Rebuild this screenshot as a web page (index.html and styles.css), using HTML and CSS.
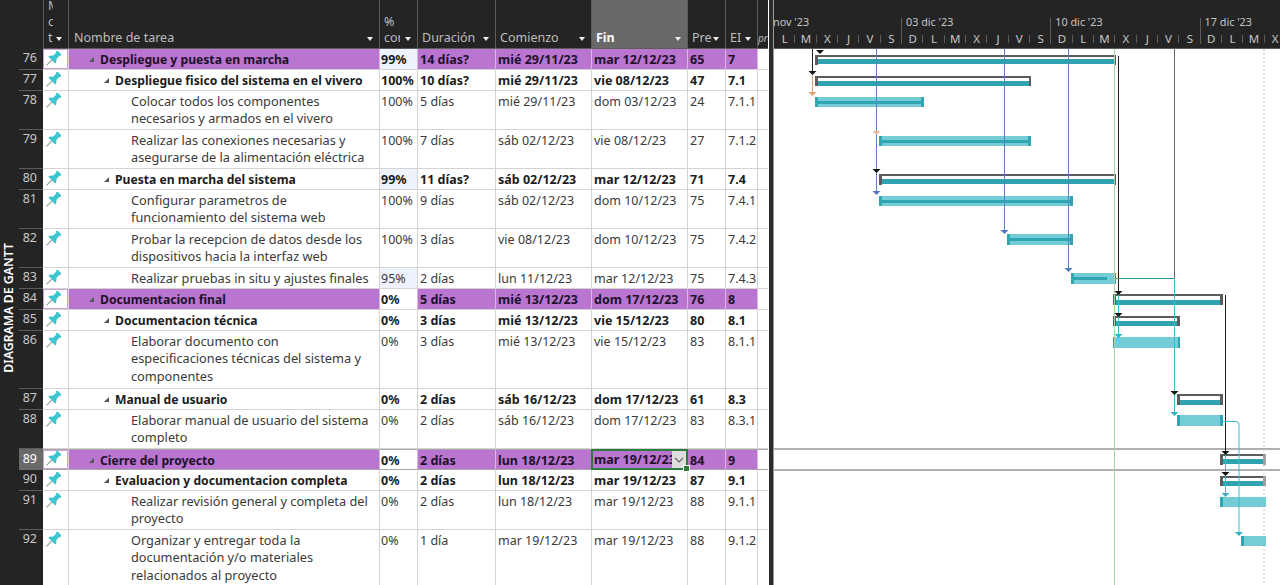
FILE: index.html
```html
<!DOCTYPE html>
<html>
<head>
    <title>Diagrama de Gantt</title>
    <link rel="stylesheet" href="styles.css">
</head>
<body>
    <svg class="defs" width="0" height="0">
        <symbol id="pin" viewBox="0 0 14 14">
            <g transform="rotate(45 7 7)">
                <path fill="#3cc4cf" d="M4 -1h6v1.6h-1v4l2.2 2.6v1.3H2.8V7.2L5 4.6v-4H4z"/>
                <path fill="#9a9a9a" d="M6.5 8.5h1V15h-1z"/>
            </g>
        </symbol>
    </svg>

    <div class="app">
        <div class="side"><span>DIAGRAMA DE GANTT</span></div>

        <div class="sheet">
            <div class="head cols">
                <div class="hcell"></div>
                <div class="hcell modo"><span>M<br>c<br>t</span><i class="drop"></i></div>
                <div class="hcell nom"><span>Nombre de tarea</span><i class="drop"></i></div>
                <div class="hcell pct"><span>%<br>cor</span><i class="drop"></i></div>
                <div class="hcell"><span>Duración</span><i class="drop"></i></div>
                <div class="hcell"><span>Comienzo</span><i class="drop"></i></div>
                <div class="hcell sorted"><span>Fin</span><i class="drop"></i></div>
                <div class="hcell"><span>Pre</span><i class="drop"></i></div>
                <div class="hcell"><span>EI</span><i class="drop"></i></div>
                <div class="hcell more"><span>pre</span></div>
            </div>

            <div class="row cols h1 sum"><div class="num">76</div><div class="pin boxed"><svg><use href="#pin"/></svg></div><div class="name l1"><i class="fold"></i>Despliegue y puesta en marcha</div><div class="pc hl">99%</div><div>14 días?</div><div>mié 29/11/23</div><div>mar 12/12/23</div><div>65</div><div>7</div><div class="end"></div></div>
            <div class="row cols h1 bold"><div class="num">77</div><div class="pin"><svg><use href="#pin"/></svg></div><div class="name l2"><i class="fold"></i>Despliegue fisico del sistema en el vivero</div><div class="pc">100%</div><div>10 días?</div><div>mié 29/11/23</div><div>vie 08/12/23</div><div>47</div><div>7.1</div><div class="end"></div></div>
            <div class="row cols h2"><div class="num">78</div><div class="pin"><svg><use href="#pin"/></svg></div><div class="name l3">Colocar todos los componentes<br>necesarios y armados en el vivero</div><div class="pc">100%</div><div>5 días</div><div>mié 29/11/23</div><div>dom 03/12/23</div><div>24</div><div>7.1.1</div><div class="end"></div></div>
            <div class="row cols h2"><div class="num">79</div><div class="pin"><svg><use href="#pin"/></svg></div><div class="name l3">Realizar las conexiones necesarias y<br>asegurarse de la alimentación eléctrica</div><div class="pc">100%</div><div>7 días</div><div>sáb 02/12/23</div><div>vie 08/12/23</div><div>27</div><div>7.1.2</div><div class="end"></div></div>
            <div class="row cols h1 bold"><div class="num">80</div><div class="pin"><svg><use href="#pin"/></svg></div><div class="name l2"><i class="fold"></i>Puesta en marcha del sistema</div><div class="pc hl">99%</div><div>11 días?</div><div>sáb 02/12/23</div><div>mar 12/12/23</div><div>71</div><div>7.4</div><div class="end"></div></div>
            <div class="row cols h2"><div class="num">81</div><div class="pin"><svg><use href="#pin"/></svg></div><div class="name l3">Configurar parametros de<br>funcionamiento del sistema web</div><div class="pc">100%</div><div>9 días</div><div>sáb 02/12/23</div><div>dom 10/12/23</div><div>75</div><div>7.4.1</div><div class="end"></div></div>
            <div class="row cols h2"><div class="num">82</div><div class="pin"><svg><use href="#pin"/></svg></div><div class="name l3">Probar la recepcion de datos desde los<br>dispositivos hacia la interfaz web</div><div class="pc">100%</div><div>3 días</div><div>vie 08/12/23</div><div>dom 10/12/23</div><div>75</div><div>7.4.2</div><div class="end"></div></div>
            <div class="row cols h1"><div class="num">83</div><div class="pin"><svg><use href="#pin"/></svg></div><div class="name l3">Realizar pruebas in situ y ajustes finales</div><div class="pc hl">95%</div><div>2 días</div><div>lun 11/12/23</div><div>mar 12/12/23</div><div>75</div><div>7.4.3</div><div class="end"></div></div>
            <div class="row cols h1 sum"><div class="num">84</div><div class="pin boxed"><svg><use href="#pin"/></svg></div><div class="name l1"><i class="fold"></i>Documentacion final</div><div class="pc">0%</div><div>5 días</div><div>mié 13/12/23</div><div>dom 17/12/23</div><div>76</div><div>8</div><div class="end"></div></div>
            <div class="row cols h1 bold"><div class="num">85</div><div class="pin"><svg><use href="#pin"/></svg></div><div class="name l2"><i class="fold"></i>Documentacion técnica</div><div class="pc">0%</div><div>3 días</div><div>mié 13/12/23</div><div>vie 15/12/23</div><div>80</div><div>8.1</div><div class="end"></div></div>
            <div class="row cols h3"><div class="num">86</div><div class="pin"><svg><use href="#pin"/></svg></div><div class="name l3">Elaborar documento con<br>especificaciones técnicas del sistema y<br>componentes</div><div class="pc">0%</div><div>3 días</div><div>mié 13/12/23</div><div>vie 15/12/23</div><div>83</div><div>8.1.1</div><div class="end"></div></div>
            <div class="row cols h1 bold"><div class="num">87</div><div class="pin"><svg><use href="#pin"/></svg></div><div class="name l2"><i class="fold"></i>Manual de usuario</div><div class="pc">0%</div><div>2 días</div><div>sáb 16/12/23</div><div>dom 17/12/23</div><div>61</div><div>8.3</div><div class="end"></div></div>
            <div class="row cols h2"><div class="num">88</div><div class="pin"><svg><use href="#pin"/></svg></div><div class="name l3">Elaborar manual de usuario del sistema<br>completo</div><div class="pc">0%</div><div>2 días</div><div>sáb 16/12/23</div><div>dom 17/12/23</div><div>83</div><div>8.3.1</div><div class="end"></div></div>
            <div class="row cols h1 sum picked"><div class="num">89</div><div class="pin boxed"><svg><use href="#pin"/></svg></div><div class="name l1"><i class="fold"></i>Cierre del proyecto</div><div class="pc">0%</div><div>2 días</div><div>lun 18/12/23</div><div class="active"><span>mar 19/12/23</span><b class="chev"><svg width="10" height="6" viewBox="0 0 10 6"><path d="M1 1l4 4 4-4" fill="none" stroke="#666" stroke-width="1.2"/></svg></b><em class="handle"></em></div><div>84</div><div>9</div><div class="end"></div></div>
            <div class="row cols h1 bold"><div class="num">90</div><div class="pin"><svg><use href="#pin"/></svg></div><div class="name l2"><i class="fold"></i>Evaluacion y documentacion completa</div><div class="pc">0%</div><div>2 días</div><div>lun 18/12/23</div><div>mar 19/12/23</div><div>87</div><div>9.1</div><div class="end"></div></div>
            <div class="row cols h2"><div class="num">91</div><div class="pin"><svg><use href="#pin"/></svg></div><div class="name l3">Realizar revisión general y completa del<br>proyecto</div><div class="pc">0%</div><div>2 días</div><div>lun 18/12/23</div><div>mar 19/12/23</div><div>88</div><div>9.1.1</div><div class="end"></div></div>
            <div class="row cols h3"><div class="num">92</div><div class="pin"><svg><use href="#pin"/></svg></div><div class="name l3">Organizar y entregar toda la<br>documentación y/o materiales<br>relacionados al proyecto</div><div class="pc">0%</div><div>1 día</div><div>mar 19/12/23</div><div>mar 19/12/23</div><div>88</div><div>9.1.2</div><div class="end"></div></div>
        </div>

        <div class="splitter"></div>

        <div class="gantt">
            <div class="timescale">
                <div class="weeks">
                    <div class="week first">nov '23</div>
                    <div class="week">03 dic '23</div>
                    <div class="week">10 dic '23</div>
                    <div class="week">17 dic '23</div>
                </div>
                <div class="days">
                    <span>L</span><span>M</span><span>X</span><span>J</span><span>V</span><span>S</span>
                    <span>D</span><span>L</span><span>M</span><span>X</span><span>J</span><span>V</span><span>S</span>
                    <span>D</span><span>L</span><span>M</span><span>X</span><span>J</span><span>V</span><span>S</span>
                    <span>D</span><span>L</span><span>M</span><span>X</span>
                </div>
            </div>

            <!-- viewBox uses page coordinates so bars can be read off the dates -->
            <svg class="chart" viewBox="774 49 506 536" width="506" height="536">
                <path class="rowline" d="M774 449H1280M774 470H1280"/>
                <path class="dotted" d="M1264 49V585"/>

                <g class="summary">
                    <path d="M815 55h301v2H815zM815 55h3v10h-3zM1114 55h2v10h-2z"/><rect class="done" x="818" y="59" width="296" height="5"/>
                    <path d="M815 76h216v2H815zM815 76h3v10h-3zM1029 76h2v10h-2z"/><rect class="done" x="818" y="81" width="211" height="5"/>
                    <path d="M879 174h237v2H879zM879 174h3v11h-3zM1114 174h2v11h-2z"/><rect class="done" x="882" y="179" width="232" height="5"/>
                    <path d="M1113 294h110v2h-110zM1113 294h3v11h-3zM1220 294h3v11h-3z"/><rect class="done" x="1116" y="300" width="104" height="5"/>
                    <path d="M1113 316h67v2h-67zM1113 316h3v10h-3zM1177 316h3v10h-3z"/><rect class="done" x="1116" y="321" width="61" height="5"/>
                    <path d="M1177 394h46v2h-46zM1177 394h3v11h-3zM1220 394h3v11h-3z"/><rect class="done" x="1180" y="400" width="40" height="5"/>
                    <path d="M1220 454h46v2h-46zM1220 454h3v11h-3z"/><rect class="done" x="1223" y="459" width="40" height="5"/>
                    <path d="M1220 476h46v2h-46zM1220 476h3v10h-3z"/><rect class="done" x="1223" y="481" width="40" height="5"/>
                    <path class="cap" d="M1263 454h3v11h-3zM1263 476h3v10h-3z"/>
                </g>

                <g class="task">
                    <rect x="815" y="97" width="109" height="10"/><path d="M815 97h3v10h-3zM921 97h3v10h-3zM818 101h103v3H818z"/>
                    <rect x="879" y="136" width="152" height="10"/><path d="M879 136h3v10h-3zM1028 136h3v10h-3zM882 140h146v3H882z"/>
                    <rect x="879" y="196" width="194" height="10"/><path d="M879 196h3v10h-3zM1070 196h3v10h-3zM882 200h188v3H882z"/>
                    <rect x="1007" y="234" width="66" height="11"/><path d="M1007 234h3v11h-3zM1070 234h3v11h-3zM1010 238h60v3h-60z"/>
                    <rect x="1071" y="273" width="45" height="11"/><path d="M1071 273h3v11h-3zM1114 273h2v11h-2zM1074 277h33v3h-33z"/>
                    <rect x="1113" y="337" width="67" height="11"/><path d="M1113 337h2v11h-2zM1178 337h2v11h-2z"/>
                    <rect x="1177" y="415" width="46" height="11"/><path d="M1177 415h3v11h-3zM1220 415h3v11h-3z"/>
                    <rect x="1220" y="497" width="46" height="10"/><path d="M1220 497h3v10h-3z"/>
                    <rect x="1241" y="536" width="25" height="10"/><path d="M1241 536h3v10h-3z"/>
                </g>

                <path class="today" d="M1114.5 49V585"/>

                <path class="link black" d="M812.5 49V72M1118.5 56V291M1225.5 295V451"/>
                <path class="link orange" d="M812.5 75V93"/>
                <path class="link blue" d="M876.5 49V192M1004.5 49V231M1068.5 49V269"/>
                <path class="link gray" d="M1174.5 49V278"/>
                <path class="link teal thin" d="M1116 278.5H1174.5"/>
                <path class="link teal" d="M1174.5 278V413M1118.5 292V335M1225.5 452V494M1223 421.5H1236q3 0 3 3V534"/>

                <path class="head-black" d="M816 50h8l-4 4zM808.500 71h8l-4 4zM872.500 169h8l-4 4zM1114.500 291h8l-4 4zM1114.500 313h8l-4 4zM1170.500 391h8l-4 4zM1221.500 451h8l-4 4zM1221.500 472h8l-4 4z"/>
                <path class="head-orange" d="M808.500 92h8l-4 4z"/>
                <path class="head-pale" d="M872.500 131h8l-4 4z"/>
                <path class="head-blue" d="M872.500 191h8l-4 4zM1000.500 230h8l-4 4zM1064.500 268h8l-4 4z"/>
                <path class="head-teal" d="M1114.500 334h8l-4 4zM1170.500 412h8l-4 4zM1221.500 493h8l-4 4zM1235 532h8l-4 4z"/>
            </svg>
        </div>
    </div>
</body>
</html>
```

FILE: styles.css
```css
body {
    margin: 0;
    height: 585px;
    overflow: hidden;
    background-color: #fff;
    font-family: "Noto Sans", Arial, sans-serif;
    font-size: 12.5px;
    color: #3a3a3a;
}

.defs {
    display: block;
    height: 0;
}

.app {
    display: flex;
    height: 585px;
}

/* left band */
.side {
    width: 19px;
    flex: none;
    box-sizing: border-box;
    padding: 30px 3px 0 0;
    background-color: #242424;
    display: flex;
    align-items: center;
    justify-content: center;
}

.side span {
    writing-mode: vertical-rl;
    transform: rotate(180deg);
    color: #fff;
    font-size: 12.3px;
    font-weight: 600;
    white-space: nowrap;
}

/* table */
.sheet {
    width: 749px;
    flex: none;
    height: 585px;
    overflow: hidden;
    background-color: #242424;
}

.cols {
    display: grid;
    grid-template-columns: 24px 26px 310px 38px 78px 96px 96px 38px 32px 11px;
}

.head {
    height: 49px;
    background-color: #242424;
    color: #bdbdbd;
}

.hcell {
    display: flex;
    align-items: flex-end;
    justify-content: space-between;
    padding: 0 6px 2px 4px;
    border-left: 1px solid #5c5c5c;
    border-bottom: 1px solid #5c5c5c;
    overflow: hidden;
    line-height: 16px;
    white-space: nowrap;
}

.hcell:first-child {
    border-left: 0;
    border-bottom-color: #242424;
}

.modo {
    border-right: 1px solid #5c5c5c;
}

.modo span {
    width: 5px;
    overflow: hidden;
}

.nom {
    border-left: 0;
    padding-left: 5px;
}

.pct span {
    width: 16px;
    overflow: hidden;
}

.hcell.sorted {
    background-color: #696969;
    color: #fff;
    font-weight: 700;
}

.more {
    padding: 0 0 2px 0;
    font-style: italic;
    font-size: 10px;
}

.more span {
    width: 10px;
    overflow: hidden;
}

.drop {
    flex: none;
    width: 0;
    height: 0;
    margin-bottom: 5px;
    border-left: 3.5px solid transparent;
    border-right: 3.5px solid transparent;
    border-top: 4px solid #eee;
}

.row {
    background-color: #fff;
}

.h1 { height: 21px; }
.h2 { height: 39px; }
.h3 { height: 58px; }

.row > div {
    box-sizing: border-box;
    padding: 2px 0 0 2px;
    line-height: 17.3px;
    border-left: 1px solid #d4d4d4;
    border-bottom: 1px solid #d4d4d4;
    white-space: nowrap;
    overflow: hidden;
}

.row > .num {
    background-color: #242424;
    color: #c8c8c8;
    font-weight: 400;
    text-align: right;
    padding: 0 6px 0 0;
    border-left: 0;
    border-bottom: 1px solid #5c5c5c;
}

.row > .pin {
    padding: 2px 0 0 2px;
    border-left: 0;
    border-right: 1px solid #d4d4d4;
}

.pin svg {
    display: block;
    width: 16px;
    height: 16px;
}

.row > .name {
    position: relative;
    font-size: 12.75px;
    border-left: 0;
}

.bold > .name,
.sum > .name {
    font-size: 12.15px;
}

.row > .l1 { padding-left: 31px; }
.row > .l2 { padding-left: 46px; }
.row > .l3 { padding-left: 62px; }

.fold {
    position: absolute;
    width: 0;
    height: 0;
    top: 8px;
    margin-left: -11px;
    border-left: 5px solid transparent;
    border-bottom: 5px solid #555;
}

.row.bold,
.row.sum {
    font-weight: 700;
    color: #1c1c1c;
}

.row > .hl {
    background-color: #eef2fc;
}

.row > .pc {
    padding-left: 1px;
}

.row > .end {
    padding: 0;
}

/* purple summary rows */
.sum > div {
    background-color: #b975cf;
    color: #21102a;
    border-left-color: #d9b6e4;
    border-bottom-color: #d4d4d4;
}

.sum > .pc {
    background-color: #fff;
    color: #1c1c1c;
}

.sum > .hl {
    background-color: #eef2fc;
}

.sum > .end {
    background-color: #fff;
}

.row > .boxed {
    background-color: #fff;
    box-shadow: inset 0 0 0 1px #c9a2d8;
}

/* selected row and active cell */
.picked > div {
    border-top: 1px solid #a8a8a8;
    border-bottom-color: #a8a8a8;
}

.picked > .num {
    background-color: #6a6a6a;
    color: #fff;
    border-bottom-color: #6a6a6a;
    border-top-color: #6a6a6a;
}

.picked > .pin {
    padding-top: 1px;
}

.row > .active {
    position: relative;
    z-index: 1;
    margin-right: -1px;
    padding: 0 0 0 1px;
    border: 2px solid #2f7a3f;
    overflow: visible;
}

.active span {
    display: block;
    overflow: hidden;
}

.chev {
    position: absolute;
    right: 0;
    top: 0;
    bottom: 0;
    width: 14px;
    display: flex;
    align-items: center;
    justify-content: center;
    background-color: #dedede;
}

.handle {
    position: absolute;
    right: -4px;
    bottom: -4px;
    width: 5px;
    height: 5px;
    background-color: #2f7a3f;
    border: 1px solid #fff;
}

.splitter {
    width: 6px;
    flex: none;
    background: linear-gradient(to right, #fff 0, #fff 1px, #2c2c2c 1px, #2c2c2c 5px, #9a9a9a 5px);
}

/* gantt side */
.gantt {
    flex: 1;
    min-width: 0;
    overflow: hidden;
}

.timescale {
    height: 49px;
    background-color: #242424;
    color: #c4c4c4;
    overflow: hidden;
    box-sizing: border-box;
    border-bottom: 1px solid #5c5c5c;
}

.weeks {
    display: flex;
    height: 30px;
    padding-top: 14px;
    box-sizing: border-box;
    line-height: 16px;
    font-size: 10.8px;
}

.week {
    flex: none;
    width: 149.3px;
    box-sizing: border-box;
    padding-left: 5px;
    white-space: nowrap;
}

.week.first {
    width: 128px;
    padding-left: 0;
    margin-left: -1px;
}

.days {
    display: flex;
    line-height: 17px;
    font-size: 11.5px;
}

.days span {
    flex: none;
    width: 21.33px;
    text-align: center;
    background: linear-gradient(#5c5c5c, #5c5c5c) right 5px / 1px 8px no-repeat;
}

/* week boundary: the tick runs up through the date row */
.days span:nth-child(7n+6) {
    position: relative;
}

.days span:nth-child(7n+6)::after {
    content: "";
    position: absolute;
    right: 0;
    top: -12px;
    width: 1px;
    height: 26px;
    background-color: #5c5c5c;
}

.chart {
    display: block;
}

.rowline {
    fill: none;
    stroke: #b0b0b0;
    stroke-width: 2;
}

.dotted {
    fill: none;
    stroke: #c4c4c4;
    stroke-dasharray: 2 2;
}

.summary path { fill: #5c5c5c; }
.summary .cap { fill: #a0a0a0; }
.done { fill: #2fa3af; }
.task rect { fill: #74ccd6; }
.task path { fill: #30a6b2; }

.today {
    fill: none;
    stroke: #a9d3a9;
}

.link {
    fill: none;
    stroke-width: 1;
}

.black { stroke: #222; }
.orange { stroke: #e0a070; }
.blue { stroke: #5a7fc4; }
.gray { stroke: #666; }
.teal { stroke: #3dbbc9; }
.thin { stroke: #2a9aa6; }

.head-black { fill: #111; }
.head-orange { fill: #e0a070; }
.head-pale { fill: #e8b698; }
.head-blue { fill: #5077c4; }
.head-teal { fill: #2fb3c2; }
```
